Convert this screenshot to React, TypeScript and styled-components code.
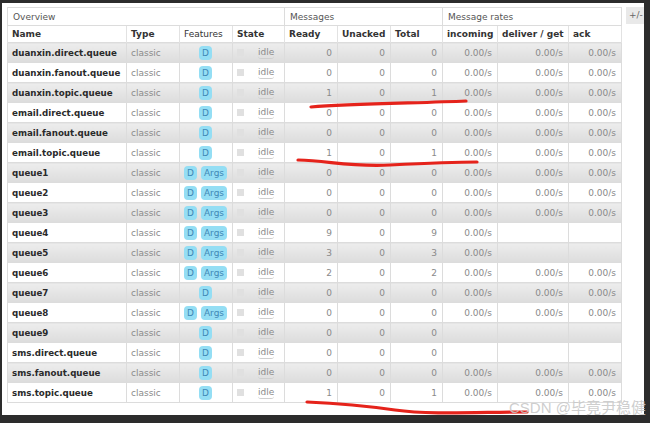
import React from 'react';
import styled, { createGlobalStyle } from 'styled-components';

type Queue = {
  name: string;
  args?: boolean;
  ready: number;
  total: number;
  rates: number; // how many of the three rate cells are filled
};

const queues: Queue[] = [
  { name: 'duanxin.direct.queue', ready: 0, total: 0, rates: 3 },
  { name: 'duanxin.fanout.queue', ready: 0, total: 0, rates: 3 },
  { name: 'duanxin.topic.queue', ready: 1, total: 1, rates: 3 },
  { name: 'email.direct.queue', ready: 0, total: 0, rates: 3 },
  { name: 'email.fanout.queue', ready: 0, total: 0, rates: 3 },
  { name: 'email.topic.queue', ready: 1, total: 1, rates: 3 },
  { name: 'queue1', args: true, ready: 0, total: 0, rates: 3 },
  { name: 'queue2', args: true, ready: 0, total: 0, rates: 3 },
  { name: 'queue3', args: true, ready: 0, total: 0, rates: 3 },
  { name: 'queue4', args: true, ready: 9, total: 9, rates: 1 },
  { name: 'queue5', args: true, ready: 3, total: 3, rates: 1 },
  { name: 'queue6', args: true, ready: 2, total: 2, rates: 3 },
  { name: 'queue7', ready: 0, total: 0, rates: 3 },
  { name: 'queue8', args: true, ready: 0, total: 0, rates: 3 },
  { name: 'queue9', ready: 0, total: 0, rates: 0 },
  { name: 'sms.direct.queue', ready: 0, total: 0, rates: 0 },
  { name: 'sms.fanout.queue', ready: 0, total: 0, rates: 3 },
  { name: 'sms.topic.queue', ready: 1, total: 1, rates: 3 },
];

const widths = [119, 53, 53, 52, 53, 53, 52, 55, 71, 53];

const App: React.FC = () => {
  return (
    <Screen>
      <GlobalStyle />
      <Panel>
        <QueueTable>
          <colgroup>
            {widths.map((w, i) => (
              <col key={i} style={{ width: w }} />
            ))}
          </colgroup>
          <thead>
            <GroupRow>
              <GroupCell colSpan={4}>Overview</GroupCell>
              <GroupCell colSpan={3}>Messages</GroupCell>
              <GroupCell colSpan={3}>Message rates</GroupCell>
            </GroupRow>
            <HeadRow>
              <HeadCell>Name</HeadCell>
              <HeadCell>Type</HeadCell>
              <HeadCell $light>Features</HeadCell>
              <HeadCell>State</HeadCell>
              <HeadCell>Ready</HeadCell>
              <HeadCell>Unacked</HeadCell>
              <HeadCell>Total</HeadCell>
              <HeadCell>incoming</HeadCell>
              <HeadCell>deliver / get</HeadCell>
              <HeadCell>ack</HeadCell>
            </HeadRow>
          </thead>
          <tbody>
            {queues.map((q, i) => (
              <Row key={q.name} $alt={i % 2 === 0}>
                <NameCell>{q.name}</NameCell>
                <Cell>classic</Cell>
                <Cell $center>
                  <Features>
                    <Badge>D</Badge>
                    {q.args && <Badge>Args</Badge>}
                  </Features>
                </Cell>
                <Cell>
                  <StateWrap>
                    <StateBox />
                    <Idle>idle</Idle>
                  </StateWrap>
                </Cell>
                <Cell $right>{q.ready}</Cell>
                <Cell $right>0</Cell>
                <Cell $right>{q.total}</Cell>
                <Cell $right>{q.rates >= 1 ? '0.00/s' : ''}</Cell>
                <Cell $right>{q.rates >= 2 ? '0.00/s' : ''}</Cell>
                <Cell $right>{q.rates >= 3 ? '0.00/s' : ''}</Cell>
              </Row>
            ))}
          </tbody>
        </QueueTable>
        <Toggle>+/-</Toggle>
      </Panel>

      <Scribbles width="650" height="423" viewBox="0 0 650 423">
        <path d="M311 107 C 350 104, 420 103, 466 101" />
        <path d="M298 160 C 330 161, 350 167, 390 165 S 450 162, 477 162" />
        <path d="M307 402 C 330 403, 360 405, 395 410 S 480 412, 527 412" />
      </Scribbles>
      <Watermark>CSDN @毕竟尹稳健</Watermark>
    </Screen>
  );
};

const GlobalStyle = createGlobalStyle`
  html, body {
    margin: 0;
    padding: 0;
    background: #2c2c2c;
  }
  body {
    font-family: 'DejaVu Sans', Verdana, sans-serif;
  }
`;

const Screen = styled.div`
  position: relative;
  width: 650px;
  height: 423px;
  overflow: hidden;
  background: #2c2c2c;
`;

const Panel = styled.div`
  display: flex;
  align-items: flex-start;
  gap: 4px;
  box-sizing: border-box;
  width: 642px;
  height: 412px;
  margin: 3px 0 0 2px;
  padding: 4px 0 0 5px;
  background: #fff;
  overflow: hidden;
`;

const QueueTable = styled.table`
  flex: none;
  width: 614px;
  table-layout: fixed;
  border-collapse: collapse;
  font-size: 9px;
  border: 1px solid #d8d8d8;
`;

const GroupRow = styled.tr`
  height: 18px;
`;

const GroupCell = styled.th`
  padding: 0 5px;
  text-align: left;
  font-weight: normal;
  color: #555;
  border: 1px solid #dcdcdc;
  background: #fff;
`;

const HeadRow = styled.tr`
  height: 17px;
`;

const HeadCell = styled.th<{ $light?: boolean }>`
  padding: 0 4px 0 4px;
  text-align: left;
  white-space: nowrap;
  font-weight: ${({ $light }) => ($light ? 'normal' : 'bold')};
  color: #333;
  border-left: 1px solid #e2e2e2;
  border-right: 1px solid #e2e2e2;
  background: #fff;
`;

const Row = styled.tr<{ $alt: boolean }>`
  height: 20px;

  td {
    background: ${({ $alt }) =>
      $alt ? 'linear-gradient(#ededed, #dcdcdc)' : '#fff'};
  }
`;

const Cell = styled.td<{ $right?: boolean; $center?: boolean }>`
  padding: 0 5px 0 4px;
  color: #8a8a8a;
  white-space: nowrap;
  overflow: hidden;
  text-align: ${({ $right, $center }) =>
    $right ? 'right' : $center ? 'center' : 'left'};
  border: 1px solid #dcdcdc;
`;

const NameCell = styled(Cell)`
  font-size: 8.7px;
  font-weight: bold;
  color: #2a2a2a;
`;

const Features = styled.span`
  display: inline-flex;
  gap: 4px;
  vertical-align: middle;
`;

const Badge = styled.abbr`
  display: inline-block;
  height: 14px;
  line-height: 14px;
  padding: 0 3px;
  border-radius: 4px;
  background: #94def4;
  color: #3f88b6;
  text-decoration: none;
`;

const StateWrap = styled.span`
  display: flex;
  align-items: center;
  gap: 14px;
`;

const StateBox = styled.span`
  width: 7px;
  height: 7px;
  background: #e0e0e0;
`;

const Idle = styled.abbr`
  color: #8a8a8a;
  text-decoration: none;
  line-height: 11px;
  border-bottom: 1px solid #cfcfcf;
  border-radius: 0 0 3px 3px;
`;

const Toggle = styled.span`
  flex: none;
  width: 26px;
  height: 17px;
  line-height: 17px;
  padding-left: 3px;
  font-size: 9px;
  color: #666;
  background: #e9e9e9;
`;

const Scribbles = styled.svg`
  position: absolute;
  top: 0;
  left: 0;
  pointer-events: none;

  path {
    fill: none;
    stroke: #e5231b;
    stroke-width: 3.2;
    stroke-linecap: round;
  }
`;

const Watermark = styled.div`
  position: absolute;
  left: 509px;
  top: 399px;
  font-family: 'Liberation Sans', 'Noto Sans CJK SC', sans-serif;
  font-size: 15px;
  line-height: 17px;
  color: rgba(200, 200, 200, 0.9);
  white-space: nowrap;
`;

export default App;
